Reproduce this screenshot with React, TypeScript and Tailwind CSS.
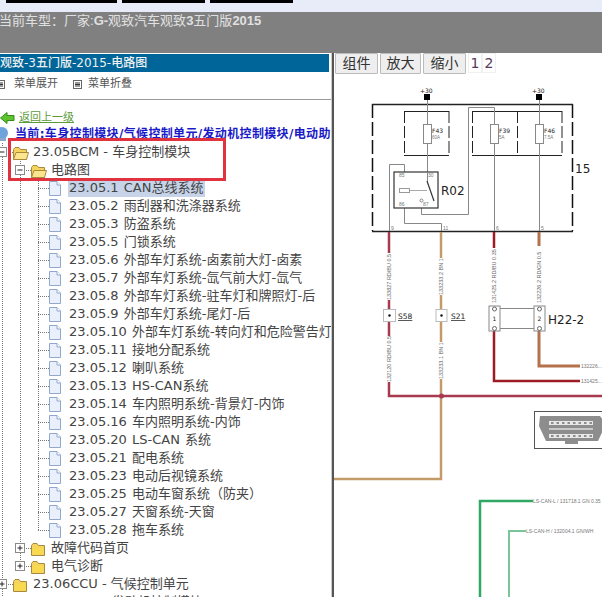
const CJK = "font-['DejaVu_Sans','Noto_Sans_CJK_SC',sans-serif]";

type Row = { level: 0 | 1 | 2; text: string; open?: boolean; last?: boolean; selected?: boolean };

const ROWS: Row[] = [
  { level: 0, text: "23.05BCM - 车身控制模块", open: true },
  { level: 1, text: "电路图", open: true },
  { level: 2, text: "23.05.1 CAN总线系统", selected: true },
  { level: 2, text: "23.05.2 雨刮器和洗涤器系统" },
  { level: 2, text: "23.05.3 防盗系统" },
  { level: 2, text: "23.05.5 门锁系统" },
  { level: 2, text: "23.05.6 外部车灯系统-卤素前大灯-卤素" },
  { level: 2, text: "23.05.7 外部车灯系统-氙气前大灯-氙气" },
  { level: 2, text: "23.05.8 外部车灯系统-驻车灯和牌照灯-后" },
  { level: 2, text: "23.05.9 外部车灯系统-尾灯-后" },
  { level: 2, text: "23.05.10 外部车灯系统-转向灯和危险警告灯" },
  { level: 2, text: "23.05.11 接地分配系统" },
  { level: 2, text: "23.05.12 喇叭系统" },
  { level: 2, text: "23.05.13 HS-CAN系统" },
  { level: 2, text: "23.05.14 车内照明系统-背景灯-内饰" },
  { level: 2, text: "23.05.16 车内照明系统-内饰" },
  { level: 2, text: "23.05.20 LS-CAN 系统" },
  { level: 2, text: "23.05.21 配电系统" },
  { level: 2, text: "23.05.23 电动后视镜系统" },
  { level: 2, text: "23.05.25 电动车窗系统\uFF08防夹\uFF09" },
  { level: 2, text: "23.05.27 天窗系统-天窗" },
  { level: 2, text: "23.05.28 拖车系统", last: true },
  { level: 1, text: "故障代码首页" },
  { level: 1, text: "电气诊断", last: true },
  { level: 0, text: "23.06CCU - 气候控制单元" },
  { level: 0, text: "23.07ECM - 发动机控制模块" },
];

function Expander({ x, open }: { x: number; open?: boolean }) {
  return (
    <g>
      <rect x={x - 4.5} y={4.5} width={9} height={9} fill="#fff" stroke="#8a8a8a" />
      <path d={`M${x - 2.5} 9h5`} stroke="#222" />
      {!open && <path d={`M${x} 6.5v5`} stroke="#222" />}
    </g>
  );
}

function Folder({ x, open }: { x: number; open?: boolean }) {
  return (
    <g transform={`translate(${x} 2)`}>
      <path d="M0.5 4.5 L2 2.5 H6 L7.5 4.5 H13.5 V14.5 H0.5 Z" fill="#f4d35e" stroke="#a98a3c" />
      {open ? (
        <path d="M0.5 14.5 L3 7.5 H15.5 L13.5 14.5 Z" fill="#fbe58f" stroke="#a98a3c" />
      ) : (
        <path d="M1.5 6.5 H12.5 V13.5 H1.5 Z" fill="#f9d94f" />
      )}
    </g>
  );
}

function Doc({ x }: { x: number }) {
  return (
    <g transform={`translate(${x} 2)`}>
      <path d="M0.5 0.5 H8 L11.5 4 V14.5 H0.5 Z" fill="#e9f0fb" stroke="#8fa8cc" />
      <path d="M8 0.5 V4 H11.5" fill="#fff" stroke="#8fa8cc" />
    </g>
  );
}

function Gutter({ row }: { row: Row }) {
  const dotted = { stroke: "#777", strokeDasharray: "1 1" };
  const width = row.level === 0 ? 33 : row.level === 1 ? 51 : 69;
  return (
    <svg width={width} height={18} className="shrink-0">
      <path d="M2.5 0V18" {...dotted} />
      {row.level === 0 && (
        <>
          <path d="M2 9.5H13" {...dotted} />
          <Expander x={2} open={row.open} />
          <Folder x={13} open={row.open} />
        </>
      )}
      {row.level === 1 && (
        <>
          <path d={row.last ? "M20.5 0V9" : "M20.5 0V18"} {...dotted} />
          <path d="M20 9.5H31" {...dotted} />
          <Expander x={20} open={row.open} />
          <Folder x={31} open={row.open} />
        </>
      )}
      {row.level === 2 && (
        <>
          <path d="M20.5 0V18" {...dotted} />
          <path d={row.last ? "M38.5 0V9" : "M38.5 0V18"} {...dotted} />
          <path d="M38 9.5H49" {...dotted} />
          <Doc x={49} />
        </>
      )}
    </svg>
  );
}

function TreeRow({ row, first }: { row: Row; first: boolean }) {
  return (
    <div
      className={
        first
          ? "flex h-[19px] items-center whitespace-nowrap text-[13px] leading-[18px] text-[#444]"
          : "flex h-[18px] items-center whitespace-nowrap text-[13px] leading-[18px] text-[#444]"
      }
    >
      <Gutter row={row} />
      <span
        className={
          row.selected
            ? "-ml-px bg-[#c6d3e8] pl-px pr-0.5 [word-spacing:1px]"
            : row.level === 2
              ? "[word-spacing:1px]"
              : ""
        }
      >
        {row.text}
      </span>
    </div>
  );
}

function MenuIcon() {
  return (
    <svg width={9} height={9} className="shrink-0">
      <rect x={0.5} y={0.5} width={8} height={8} fill="#fff" stroke="#666" />
      <path d="M2 3H7M2 4.5H7M2 6H7" stroke="#333" />
    </svg>
  );
}

function Wiring() {
  const vert = (x: number, y: number, t: string) => (
    <text
      x={x + 2}
      y={y}
      transform={`rotate(-90 ${x + 2} ${y})`}
      fontSize={5.5}
      fill="#666"
      fontFamily="Liberation Sans, sans-serif"
    >
      {t}
    </text>
  );
  const small = (x: number, y: number, t: string, size = 5) => (
    <text x={x} y={y} fontSize={size} fill="#777" fontFamily="Liberation Sans, sans-serif">
      {t}
    </text>
  );
  const label = (x: number, y: number, t: string, size: number) => (
    <text x={x} y={y} fontSize={size} fill="#222" fontFamily="DejaVu Sans, sans-serif">
      {t}
    </text>
  );
  return (
    <svg viewBox="334 76 268 521" width={268} height={521} className="block">
      {/* fuse / relay block */}
      <path d="M372.5 104V231M572.5 104V231" fill="none" stroke="#111" strokeWidth={1.5} strokeDasharray="14 4" />
      <path d="M372 104.5H573M372 231.5H573" fill="none" stroke="#222" strokeWidth={1.3} />
      <path d="M404 111.5H449M404 155.5H449M472 111.5H562M472 155.5H562" stroke="#222" />
      <path d="M404.5 111V156M449 111V156M472.5 111V156M517.5 111V156M562 111V156" stroke="#222" strokeDasharray="12 3" />
      <path d="M427.5 100V172M539.5 100V231M494.5 107.5V231M468.5 107.5H494.5M468.5 107.5V214.5H421.5V203" fill="none" stroke="#888" />
      <path d="M389.5 231V164.5H404.5V223.5H441.5V231" fill="none" stroke="#888" />
      <rect x={424} y={94} width={6} height={6} fill="#000" />
      <rect x={536} y={94} width={6} height={6} fill="#000" />
      {label(420, 93, "+30", 6)}
      {label(532, 93, "+30", 6)}
      <rect x={423.5} y={124.5} width={8} height={19} fill="#fff" stroke="#888" />
      <rect x={490.5} y={124.5} width={8} height={19} fill="#fff" stroke="#888" />
      <rect x={535.5} y={124.5} width={8} height={19} fill="#fff" stroke="#888" />
      {label(432, 133, "F43", 6)}
      {label(499, 133, "F39", 6)}
      {label(544, 133, "F46", 6)}
      {small(432, 139, "60A", 4.5)}
      {small(499, 139, "5A", 4.5)}
      {small(544, 139, "7.5A", 4.5)}
      <rect x={394} y={172} width={44} height={36} fill="#fff" stroke="#333" strokeWidth={1.2} />
      <path d="M404 190.5H427" stroke="#aaa" />
      <rect x={399.5} y={188.5} width={10} height={4} fill="#fff" stroke="#999" />
      <path d="M427 181L434 201" fill="none" stroke="#333" strokeWidth={1.2} />
      <path d="M427.5 172V181" stroke="#888" />
      <circle cx={421.5} cy={200.5} r={1.5} fill="#fff" stroke="#888" />
      {small(399, 177, "85")}
      {small(428, 177, "30")}
      {small(399, 206, "86")}
      {small(423, 206, "87")}
      {label(441, 195, "R02", 12)}
      {label(575, 173, "15", 12)}
      {small(391, 230, "9")}
      {small(443, 230, "11")}
      {small(496, 230, "6")}
      {small(541, 230, "5")}
      {/* wires */}
      <g fill="none" strokeWidth={2.5}>
        <path d="M389 232V253M389 300V309M389 321V336M389 382V396H602" stroke="#a83a50" />
        <path d="M441 232V258M441 295V309M441 321V342M441 379V479H334" stroke="#c39a68" />
        <path d="M494 232V248M494 331V381H580" stroke="#9c1c24" />
        <path d="M539 232V246M539 331V366H580" stroke="#b5704c" strokeWidth={3} />
        <path d="M480 597V501H533" stroke="#2fa864" />
        <path d="M509 597V531H526" stroke="#79c595" strokeWidth={2} />
      </g>
      <circle cx={441.5} cy={396} r={2.5} fill="#a83a50" />
      {vert(389, 300, "133827 RD/BU 0.5")}
      {vert(441, 295, "133233.2 BN 1")}
      {vert(494, 303, "131425.2 RD/BU 0.35")}
      {vert(539, 303, "132226.2 RD/GN 0.5")}
      {vert(389, 382, "132120 RD/BU 0.5")}
      {vert(441, 379, "133233.1 BN 1")}
      {/* splices */}
      <rect x={383.5} y={309.5} width={12} height={12} fill="#fff" stroke="#bbb" />
      <circle cx={389.5} cy={315.5} r={1.2} fill="#111" />
      <text x={398} y={319} fontSize={7.5} fill="#222" textDecoration="underline" fontFamily="DejaVu Sans, sans-serif">S58</text>
      <rect x={436} y={309.5} width={11} height={12} fill="#fff" stroke="#bbb" />
      <circle cx={441.5} cy={315.5} r={1.2} fill="#111" />
      <text x={451} y={319} fontSize={7.5} fill="#222" textDecoration="underline" fontFamily="DejaVu Sans, sans-serif">S21</text>
      {/* H22-2 */}
      <path d="M500 308.5H534M500 328.5H534" stroke="#888" />
      <rect x={489} y={306} width={11} height={25} fill="#fff" stroke="#888" />
      <rect x={534} y={306} width={11} height={25} fill="#fff" stroke="#888" />
      <circle cx={494.5} cy={309} r={2} fill="#fff" stroke="#666" />
      <circle cx={494.5} cy={328.5} r={2} fill="#fff" stroke="#666" />
      <circle cx={539.5} cy={309} r={2} fill="#fff" stroke="#666" />
      <circle cx={539.5} cy={328.5} r={2} fill="#fff" stroke="#666" />
      {label(492.5, 321, "1", 6)}
      {label(537.5, 321, "2", 6)}
      {label(548, 324, "H22-2", 12)}
      {small(581, 368, "132226...")}
      {small(581, 383, "131425...")}
      {/* diagnostic connector */}
      <rect x={534.5} y={411.5} width={75} height={37} fill="#fff" stroke="#555" />
      <path d="M540 416H600L606 424L598 441H578V444H565V441H546L539 426Z" fill="#8d8d8d" />
      <rect x={549} y={421} width={44} height={4} fill="#e8e8e8" />
      <rect x={549} y={428} width={44} height={2} fill="#c8c8c8" />
      <rect x={549} y={434} width={44} height={4} fill="#e8e8e8" />
      <path d="M551 423H592M551 436H592" stroke="#333" strokeDasharray="2.5 3" />
      {small(533, 503, "LS-CAN-L / 131718.1 GN 0.35")}
      {small(526, 533, "LS-CAN-H / 132004.1 GN/WH")}
    </svg>
  );
}

export default function App() {
  return (
    <div className={`h-[597px] w-[602px] overflow-hidden bg-white ${CJK}`}>
      {/* top strip */}
      <div className="flex h-3 gap-[5px] bg-[#e8ecf8] pl-1.5">
        <div className="h-[3px] w-[111px] bg-black" />
        <div className="h-[3px] w-[83px] bg-black" />
        <div className="h-[3px] w-[83px] bg-black" />
      </div>
      <div className="h-[41px] bg-[#808080] font-['Liberation_Sans','Noto_Sans_CJK_SC',sans-serif] text-[13px] leading-[18px] whitespace-pre text-[#e0e0e0]">
        <span className="-ml-px inline-block">
          当前车型{"\uFF1A"}厂家:<b>G-</b>观致汽车观致<b>3</b>五门版<b>2015</b>
        </span>
      </div>

      <div className="flex h-[544px]">
        {/* left tree panel */}
        <div className="w-[332px] shrink-0 overflow-hidden border-r border-[#ccc] pt-px">
          <div className="mr-[2px] h-[18px] bg-[#006699] text-[12px] leading-[18px] font-medium whitespace-nowrap text-[#f0f0f0]">
            观致-3五门版-2015-电路图
          </div>
          <div className="flex h-7 items-center border-b border-[#999] pb-0.5 text-[11px] text-[#555]">
            <div className="-ml-1"><MenuIcon /></div>
            <span className="mr-[15px] ml-[9px]">菜单展开</span>
            <MenuIcon />
            <span className="ml-[6px]">菜单折叠</span>
          </div>
          <div className="flex h-[26px] items-end gap-[4px] text-[11px] leading-[16px]">
            <svg width={15} height={16} className="shrink-0">
              <path d="M0.5 8L7 2.5V5.5H14V10.5H7V13.5Z" fill="#5fc22e" stroke="#2f8f12" />
            </svg>
            <span className="text-[#5d9b3a] underline">返回上一级</span>
          </div>
          <div className="flex h-[16px] items-center whitespace-nowrap text-[12px] font-bold tracking-[0.35px] text-[#1a1ac8]">
            <svg width={15} height={14} className="shrink-0">
              <circle cx={2} cy={6} r={6} fill="#6fa3dc" />
              <path d="M-2 11H6V14H-2Z" fill="#8fa8c8" />
            </svg>
            当前:车身控制模块/气候控制单元/发动机控制模块/电动助
          </div>
          <div className="relative">
            {ROWS.map((row, i) => (
              <TreeRow key={row.text} row={row} first={i === 0} />
            ))}
            <div className="pointer-events-none absolute top-[-4px] left-2 h-[43px] w-[218px] border-[3px] border-[#e0323f]" />
          </div>
        </div>

        {/* diagram panel */}
        <div className="min-w-0 flex-1 border-l-2 border-[#555]">
          <div className="flex h-[23px] items-start gap-[2px] pl-px text-[14px] text-[#333]">
            <button className="h-[21px] w-[43px] rounded-[1px] border border-[#bbb] bg-[#eee] leading-[19px]">组件</button>
            <button className="h-[21px] w-[41px] rounded-[1px] border border-[#bbb] bg-[#eee] leading-[19px]">放大</button>
            <button className="h-[21px] w-[43px] rounded-[1px] border border-[#bbb] bg-[#eee] leading-[19px]">缩小</button>
            <span className="h-[20px] w-[14px] border border-[#f0f0f0] text-center leading-[18px] text-[#5a3a5a]">1</span>
            <span className="-ml-[2px] h-[20px] w-[14px] border border-[#f0f0f0] text-center leading-[18px] text-[#5a3a5a]">2</span>
          </div>
          <Wiring />
        </div>
      </div>
    </div>
  );
}
